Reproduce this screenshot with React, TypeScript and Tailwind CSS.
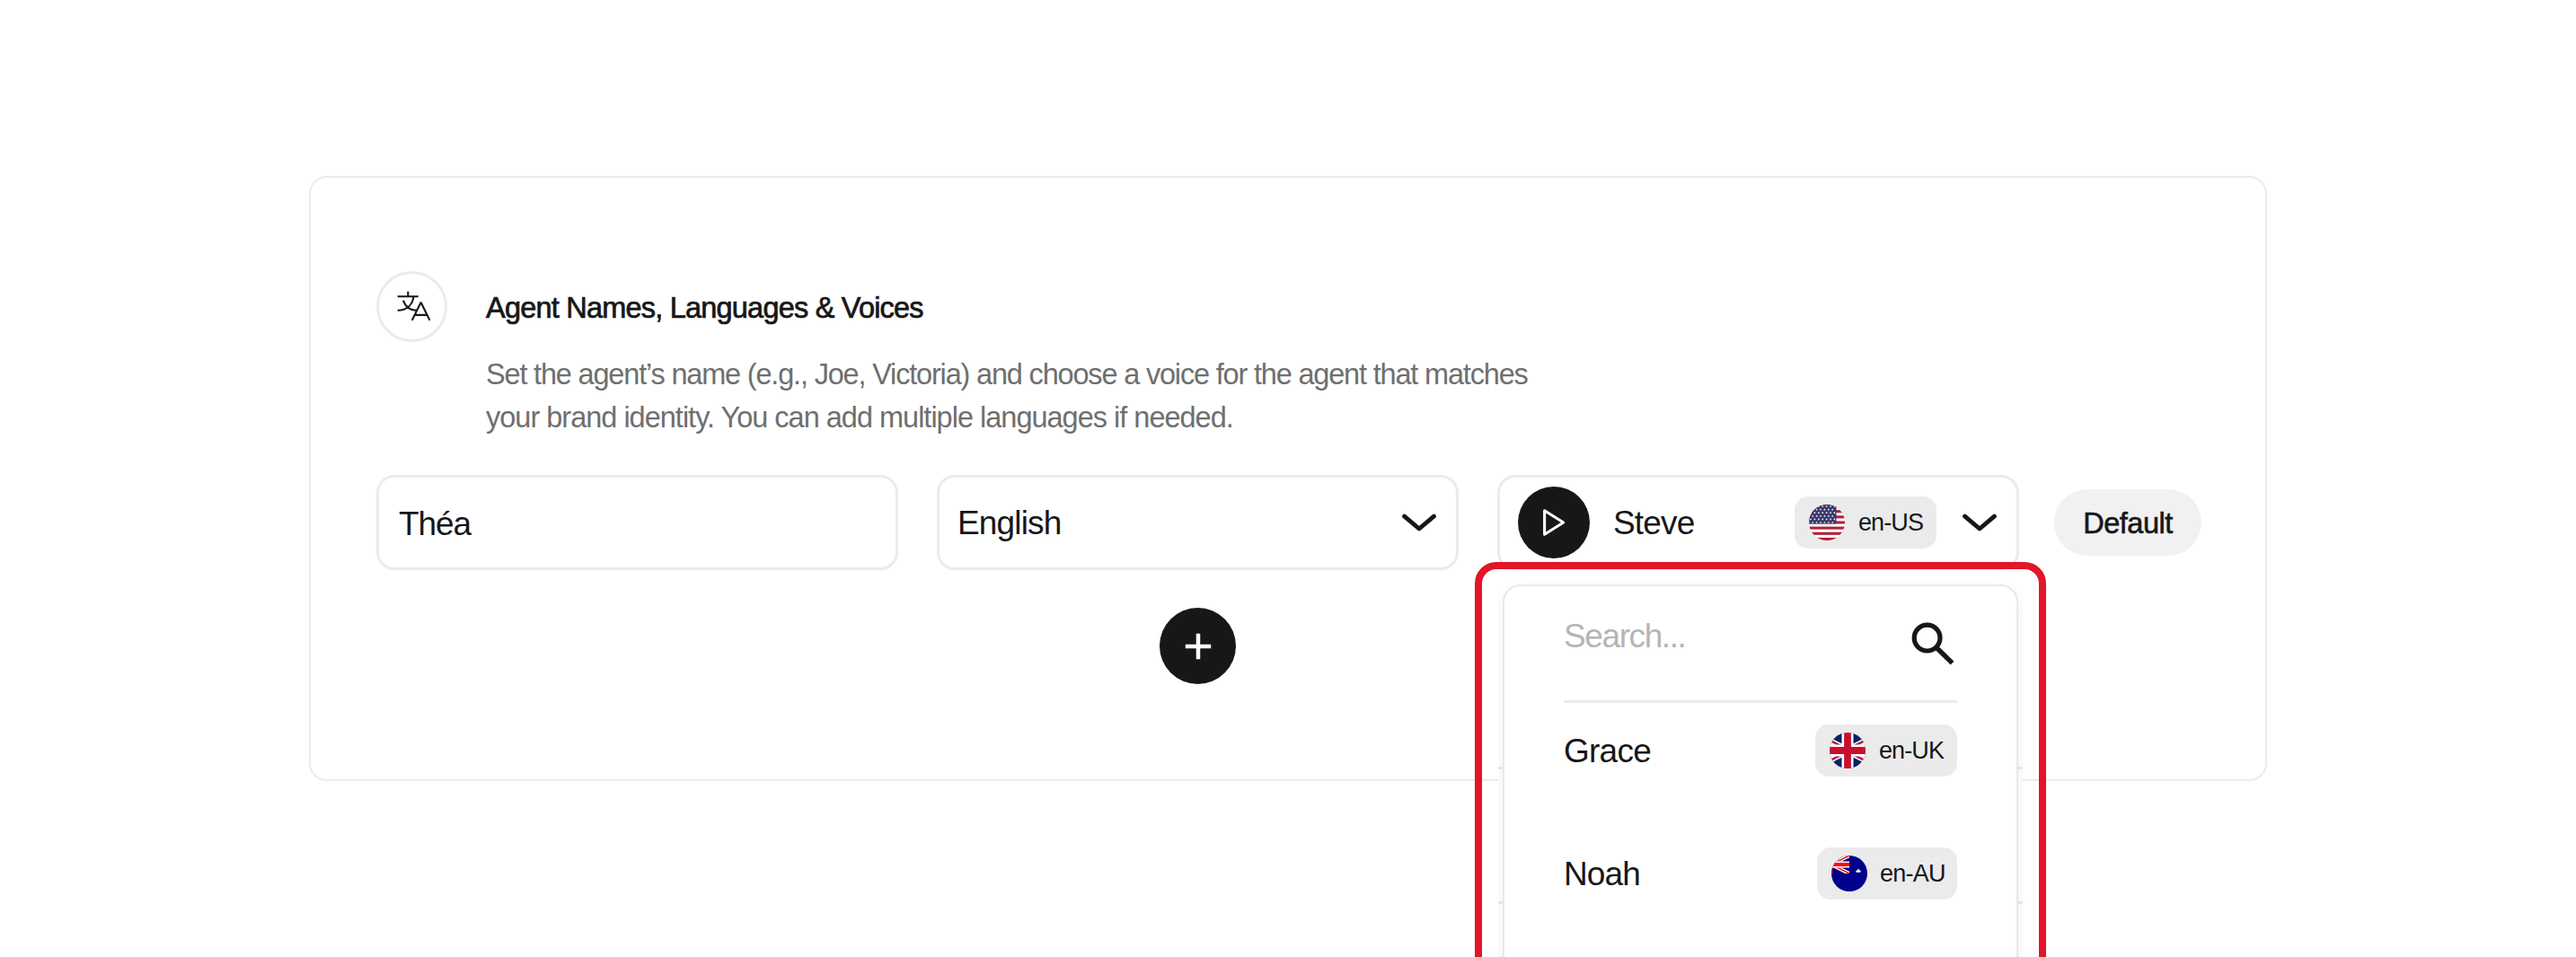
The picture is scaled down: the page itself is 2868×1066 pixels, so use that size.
import React from "react";

function TranslateIcon() {
  return (
    <svg viewBox="23.5 23.5 40 40" className="size-10 shrink-0" fill="none" stroke="#171717" strokeWidth="2.1">
      <path d="M38.8 26.2V31.7M27.2 31.8H50.2M45 31.8C43.8 40 38.5 47 27.2 47.2M33.4 36.2C35.6 42.6 40.6 47.2 48.4 47.4" />
      <path d="M43.2 58.4L53.1 38.2L63 58.4M46 52.4H60.3" strokeLinejoin="bevel" />
    </svg>
  );
}

function Chevron() {
  return (
    <svg viewBox="0 0 38 20" className="h-5 w-[38px] shrink-0" fill="none" stroke="#171717" strokeWidth="4.9" strokeLinecap="round" strokeLinejoin="round">
      <path d="M2.6 3.2L19 17L35.4 3.2" />
    </svg>
  );
}

function PlusIcon() {
  return (
    <svg viewBox="0 0 30 30" className="size-[30px]" fill="none" stroke="#fff" strokeWidth="4.5">
      <path d="M15 0.8V29.2M0.8 15H29.2" />
    </svg>
  );
}

function PlayIcon() {
  return (
    <svg viewBox="0 0 26 32" className="h-8 w-[26px]" fill="none" stroke="#fff" strokeWidth="3.1" strokeLinejoin="round">
      <path d="M2.6 2.8V29.2L23.6 16Z" />
    </svg>
  );
}

function SearchIcon() {
  return (
    <svg viewBox="0 0 48 48" className="size-12 shrink-0" fill="none" stroke="#171717" strokeWidth="5.2">
      <circle cx="17.6" cy="17.6" r="14.4" />
      <path d="M27.6 28L45.6 45.6" strokeWidth="5.4" />
    </svg>
  );
}

const STAR_ROWS = [2, 5.6, 9.2, 12.8, 16.4, 20];
const STAR_COLS = [2, 6.4, 10.8, 15.2, 19.6, 24, 28.4];

function FlagUS() {
  return (
    <svg viewBox="0 0 40 40" className="size-10 shrink-0 rounded-full">
      <rect width="40" height="40" fill="#fff" />
      {[0, 1, 2, 3, 4, 5, 6].map((i) => (
        <rect key={i} y={i * 6.15} width="40" height="3.08" fill="#b22234" />
      ))}
      <rect width="30.5" height="21.4" fill="#3c3b6e" />
      {STAR_ROWS.map((y, r) =>
        STAR_COLS.map((x) => <circle key={`${x}-${y}`} cx={r % 2 ? x - 2.2 : x} cy={y} r="0.85" fill="#fff" />)
      )}
    </svg>
  );
}

function FlagUK() {
  return (
    <svg viewBox="0 0 40 40" className="size-10 shrink-0 rounded-full">
      <rect width="40" height="40" fill="#012169" />
      <path d="M-20 0L60 40M-20 40L60 0" stroke="#fff" strokeWidth="8" />
      <path d="M-20 -1.4L20 18.6M20 21.4L60 41.4M-20 41.4L20 21.4M20 18.6L60 -1.4" stroke="#c8102e" strokeWidth="2.4" />
      <path d="M20 0V40M0 20H40" stroke="#fff" strokeWidth="13" />
      <path d="M20 0V40M0 20H40" stroke="#c8102e" strokeWidth="7.8" />
    </svg>
  );
}

function FlagAU() {
  return (
    <svg viewBox="0 0 40 40" className="size-10 shrink-0 rounded-full">
      <rect width="40" height="40" fill="#00008b" />
      <svg width="20" height="20" viewBox="0 0 20 20">
        <path d="M-20 20L20 0M-20 0L20 20" stroke="#fff" strokeWidth="4.2" />
        <path d="M-20 20L20 0M-20 0L20 20" stroke="#f00" strokeWidth="1.5" />
        <path d="M0 10H20" stroke="#fff" strokeWidth="7" />
        <path d="M0 10H20" stroke="#f00" strokeWidth="4" />
        <path d="M0 0V20" stroke="#f00" strokeWidth="2.6" />
      </svg>
      <path d="M30 14.2L31.2 16.4L32.8 16.4L32.2 18.8H27.6L27.2 16.6L28.9 16.4Z" fill="#fff" />
    </svg>
  );
}

function Badge({ flag, code, className }: { flag: React.ReactNode; code: string; className: string }) {
  return (
    <span className={`flex h-[58px] shrink-0 items-center rounded-[15px] bg-[#ebebeb] text-[27px] ${className}`}>
      {flag}
      <span>{code}</span>
    </span>
  );
}

const FIELD = "flex h-[106px] w-[581px] items-center rounded-[20px] border-3 border-[#ebebeb] bg-white";

function VoiceMenu() {
  return (
    <div className="absolute top-[115px] left-px h-[500px] w-[584px] overflow-hidden bg-white">
      {/* edges of the rows behind the menu */}
      <div className="absolute top-[210px] h-[153px] w-full border-y-[3px] border-[#ebebeb]" />
      <div className="relative mt-[7px] ml-[5px] h-[700px] w-[574px] rounded-[20px] border-2 border-[#e9e9e9] bg-white px-[66px] shadow-[0_6px_20px_rgba(0,0,0,0.06)]">
        <div className="flex h-[130px] items-center justify-between border-b-[3px] border-[#ebebeb]">
          <span className="relative -top-[8px] tracking-[-1.4px] text-[#b5b5b5]">Search...</span>
          <span className="mr-[3px]"><SearchIcon /></span>
        </div>
        <div className="mt-[24px] flex items-center justify-between">
          <span className="pt-px tracking-[-0.75px]">Grace</span>
          <Badge flag={<FlagUK />} code="en-UK" className="w-[158px] gap-[15px] pl-4 tracking-[-0.9px]" />
        </div>
        <div className="mt-[79px] flex items-center justify-between">
          <span className="pt-px tracking-[-0.9px]">Noah</span>
          <Badge flag={<FlagAU />} code="en-AU" className="w-[156px] gap-[14px] pl-4 tracking-[-0.75px]" />
        </div>
      </div>
    </div>
  );
}

export default function App() {
  return (
    <div className="h-[1066px] w-[2868px] overflow-hidden bg-white pt-[196px] font-['Liberation_Sans',Arial,sans-serif] text-[37px] leading-[48px] text-[#171717]">
      <main className="mx-auto h-[674px] w-[2180px] rounded-[20px] border-2 border-[#ebebeb] pt-[104px] pl-[73px]">
        <header className="flex gap-[43px]">
          <div className="flex size-[79px] shrink-0 items-center justify-center rounded-full border-3 border-[#ebebeb]">
            <TranslateIcon />
          </div>
          <div className="text-[32.5px] whitespace-nowrap">
            <h1 className="mt-[17px] tracking-[-0.79px] [-webkit-text-stroke:0.7px_#171717]">Agent Names, Languages &amp; Voices</h1>
            <p className="mt-[26px] text-[#6f6f6f]">
              <span className="block tracking-[-1.18px]">Set the agent’s name (e.g., Joe, Victoria) and choose a voice for the agent that matches</span>
              <span className="block tracking-[-1.0px]">your brand identity. You can add multiple languages if needed.</span>
            </p>
          </div>
        </header>

        <div className="mt-[40px] flex items-center">
          <div className={`${FIELD} pl-[22px] tracking-[-1.1px]`}>
            <span className="mt-[3px]">Théa</span>
          </div>
          <div className={`${FIELD} ml-[43px] justify-between pr-[22px] pl-[20px] tracking-[-0.85px]`}>
            <span className="pt-px">English</span>
            <Chevron />
          </div>
          <div className="relative ml-[43px]">
            <div className={`${FIELD} pl-5 tracking-[-0.85px]`}>
              <span className="flex size-20 shrink-0 items-center justify-center rounded-full bg-[#171717]">
                <PlayIcon />
              </span>
              <span className="ml-[26px] flex-1 pt-px">Steve</span>
              <Badge flag={<FlagUS />} code="en-US" className="mr-[29px] w-[158px] gap-[15px] pl-4 tracking-[-0.9px]" />
              <span className="mr-[22px] flex"><Chevron /></span>
            </div>
            <VoiceMenu />
            <div className="absolute top-[97px] -left-[25px] h-[520px] w-[636px] rounded-[24px] border-8 border-[#e31528]" />
          </div>
          <span className="ml-[39px] flex h-[74px] w-[164px] items-center justify-center rounded-full bg-[#f1f1f1] pt-px text-[32.5px] tracking-[-0.5px] [-webkit-text-stroke:0.6px_#171717]">
            Default
          </span>
        </div>

        <button className="mt-[42px] ml-[872px] flex size-[85px] items-center justify-center rounded-full bg-[#171717]">
          <PlusIcon />
        </button>
      </main>
    </div>
  );
}
